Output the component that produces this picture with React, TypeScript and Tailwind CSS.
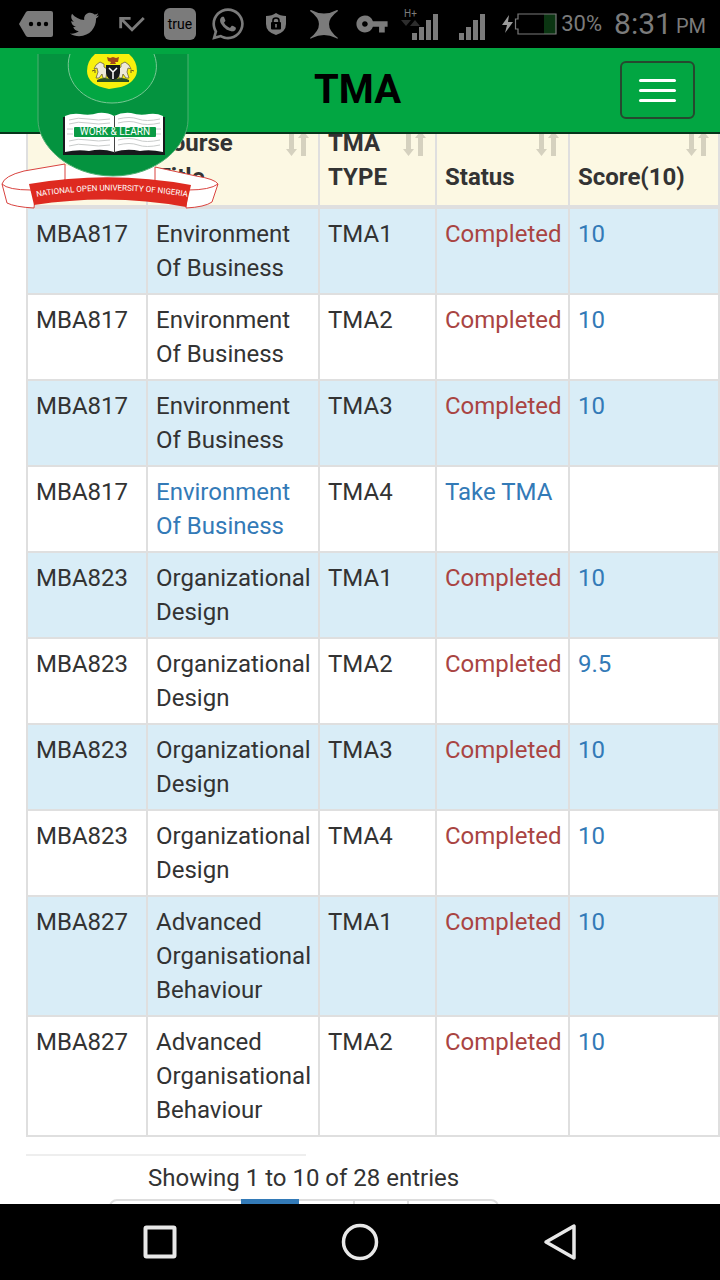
import type { ReactNode } from "react";
import { FaTwitter, FaWhatsapp } from "react-icons/fa";
import { MdCallMissed, MdVpnKey } from "react-icons/md";

type Row = {
  code: string;
  title: string;
  type: string;
  score?: string;
};

const rows: Row[] = [
  { code: "MBA817", title: "Environment Of Business", type: "TMA1", score: "10" },
  { code: "MBA817", title: "Environment Of Business", type: "TMA2", score: "10" },
  { code: "MBA817", title: "Environment Of Business", type: "TMA3", score: "10" },
  { code: "MBA817", title: "Environment Of Business", type: "TMA4" },
  { code: "MBA823", title: "Organizational Design", type: "TMA1", score: "10" },
  { code: "MBA823", title: "Organizational Design", type: "TMA2", score: "9.5" },
  { code: "MBA823", title: "Organizational Design", type: "TMA3", score: "10" },
  { code: "MBA823", title: "Organizational Design", type: "TMA4", score: "10" },
  { code: "MBA827", title: "Advanced Organisational Behaviour", type: "TMA1", score: "10" },
  { code: "MBA827", title: "Advanced Organisational Behaviour", type: "TMA2", score: "10" },
];

const Slot = ({ children }: { children: ReactNode }) => (
  <div className="flex w-12 shrink-0 items-center justify-center">{children}</div>
);

const StatusBar = () => (
  <div className="flex h-12 shrink-0 items-center bg-black pr-3.5 pl-3 text-[#7b7b7b]">
    {/* notifications */}
    <Slot>
      <svg width="34" height="26" viewBox="0 0 34 26">
        <path d="M9 0H32Q34 0 34 2V24Q34 26 32 26H9Q8 26 7 25L0 13L7 1Q8 0 9 0Z" fill="currentColor" />
        <circle cx="12" cy="13" r="2.2" />
        <circle cx="20" cy="13" r="2.2" />
        <circle cx="27" cy="13" r="2.2" />
      </svg>
    </Slot>
    <Slot><FaTwitter size={29} /></Slot>
    <Slot><MdCallMissed size={34} /></Slot>
    <Slot>
      <div className="flex h-8 w-8 items-center justify-center rounded-md bg-[#7b7b7b] text-sm text-black">true</div>
    </Slot>
    <Slot><FaWhatsapp size={36} /></Slot>
    <Slot>
      <svg width="20" height="22" viewBox="0 0 20 22">
        <path d="M10 0Q14 3 20 3V11Q20 19 10 22Q0 19 0 11V3Q6 3 10 0Z" fill="currentColor" />
        <rect x="5" y="9" width="10" height="7.5" rx="1" />
        <path d="M7 10V7.5Q7 5 10 5T13 7.500V10" fill="none" stroke="#000" strokeWidth="1.6" />
        <path d="M10 11V14.500" stroke="#7b7b7b" strokeWidth="1.6" />
      </svg>
    </Slot>
    <Slot>
      <svg width="28" height="29" viewBox="0 0 28 29">
        <path d="M1 0Q14 7 27 0Q28 0 28 1Q10 14 28 28Q28 29 26 28Q14 22 2 28Q0 29 0 28Q18 14 0 1Q0 0 1 0Z" fill="currentColor" />
      </svg>
    </Slot>
    <Slot><MdVpnKey size={34} /></Slot>

    {/* signal, battery and clock */}
    <div className="ml-auto flex items-center">
      <svg width="38" height="32" viewBox="0 0 38 32">
        <text x="3" y="9" fontSize="10" fill="currentColor">H+</text>
        <path d="M0 12H10L5 18ZM9 18H19L14 12Z" fill="#2d2d2d" />
        <path d="M11 25h5v7h-5zM18 19h5v13h-5zM25 12h5v20h-5zM32 6h5v26h-5z" fill="currentColor" />
      </svg>
      <svg className="ml-5" width="27" height="32" viewBox="0 0 27 32">
        <path d="M0 25h5v7H0zM7 19h5v13H7zM14 12h5v20h-5zM21 6h5v26h-5z" fill="currentColor" />
      </svg>
      <svg className="ml-4" width="55" height="22" viewBox="0 0 55 22">
        <path d="M7 2L0 12H5L3 20L11 9H6Z" fill="#9a9a9a" />
        <rect x="42" y="1" width="12" height="20" fill="#0b3512" />
        <path d="M16 1H54V21H16V16H13.500V6H16Z" fill="none" stroke="currentColor" strokeWidth="1.2" />
      </svg>
      <span className="ml-1 text-[22px]">30%</span>
      <span className="ml-3 text-[30px]">8:31</span>
      <span className="ml-1 pt-1 text-xl">PM</span>
    </div>
  </div>
);

const Logo = () => (
  <svg
    className="absolute top-[6px] left-0 z-10"
    width="220"
    height="156"
    viewBox="0 54 220 156"
    role="img"
    aria-label="National Open University of Nigeria"
  >
    {/* shield */}
    <path d="M65 166H155V184H65Z" fill="#fff" />
    <path d="M38 54H188V120C188 145 158 176 113 176C68 176 38 145 38 120Z" fill="#04933f" />
    <path d="M38 54V120C38 145 68 176 113 176C158 176 188 145 188 120V54" fill="none" stroke="#4fae72" strokeWidth="1" />
    {/* crest */}
    <path d="M70 54C62 79 82 103 112 103C142 103 164 79 154 54Z" fill="#02a642" />
    <path d="M70 54C62 79 82 103 112 103C142 103 164 79 154 54" fill="none" stroke="#79c794" strokeWidth="1" />
    <path d="M95 54H129Q137 61 137 71Q136 82 121 87L109 89Q87 85 87 71Q87 61 95 54Z" fill="#f8f00c" />
    <path d="M107 57l3 1 3-1 3 1 3-1-1 5-3 0 1 2h-6l1-2-3-1z" fill="#a3481b" />
    <path d="M96 65l4-3 4 2v3l3 2-1 9h-3l-1-4-3 4h-3l2-6-1-4-3 1zM129 65l-4-3-4 2v3l-3 2 1 9h3l1-4 3 4h3l-2-6 1-4 3 1z" fill="#eee9d8" stroke="#6b6540" strokeWidth=".8" />
    <path d="M106 65H120V73Q119 79 113 81Q107 79 106 73Z" fill="#17191c" />
    <path d="M109 68l4 4 4-4M113 72v7" fill="none" stroke="#fff" strokeWidth="1.5" />
    <path d="M97 80Q104 76 113 80Q122 76 129 80V82H97Z" fill="#2a4f25" />
    <path d="M92 71l3-1v3m39-2l-3-1v3" fill="none" stroke="#6b5b20" strokeWidth="1" />
    {/* book */}
    <path d="M63 117H165V155H63Z" fill="#17191c" />
    <path d="M65 116Q72 113 80 114Q90 116 98 113Q107 112 114 116Q122 112 131 113Q140 116 149 114Q157 113 163 116V152Q150 149 140 151Q127 148 114 152Q102 148 89 151Q78 149 65 152Z" fill="#fff" />
    <g fill="none" stroke="#c9cccb" strokeWidth="1">
      <path d="M69 120Q78 117 88 119T110 119M69 124Q78 121 88 123T110 123M69 141Q78 138 88 140T110 140M69 146Q78 143 88 145T110 145" />
      <path d="M118 119Q130 116 138 119T160 119M118 123Q130 120 138 123T160 123M118 140Q130 137 138 140T160 140M118 145Q130 142 138 145T160 145" />
      <path d="M67 129h6M67 134h6M156 129h5M156 134h5" />
    </g>
    <path d="M114.500 116V153" stroke="#444" strokeWidth="1" />
    <rect x="74" y="127" width="82" height="10" rx="1" fill="#0a9b45" />
    <text x="115" y="135" textAnchor="middle" fontSize="10" fill="#fff">WORK &amp; LEARN</text>
    {/* ribbon */}
    <g fill="#fff" stroke="#d9433f" strokeWidth="1">
      <path d="M65 164V180L36 188L34 208Q15 207 7 203L2 184Q4 176 24 171Z" />
      <path d="M155 167V182L188 190L186 208Q205 207 212 202L218 184Q215 179 196 176Z" />
      <path d="M2 184Q8 190 31 190M218 184Q210 190 188 190" fill="none" />
    </g>
    <path d="M29 184Q110 170 191 185L186 207Q112 193 34 205Z" fill="#de2a20" />
    <path id="motto" d="M30 198Q112 183 194 198" fill="none" />
    <text fontSize="8" fill="#fff">
      <textPath href="#motto" startOffset="50%" textAnchor="middle">NATIONAL OPEN UNIVERSITY OF NIGERIA</textPath>
    </text>
  </svg>
);

const Header = () => (
  <header className="relative z-10 grid h-[86px] shrink-0 grid-cols-3 items-center border-b-2 border-[#06341a] bg-[#02a642] pr-[25px] pl-5">
    <Logo />
    <h1 className="col-start-2 text-center text-[40px] font-bold text-black">TMA</h1>
    <button
      type="button"
      aria-label="Toggle navigation"
      className="flex h-[58px] w-[75px] flex-col items-center justify-center gap-[7px] justify-self-end rounded-md border-2 border-[#26492f]"
    >
      <span className="h-[3px] w-[37px] rounded-xs bg-white" />
      <span className="h-[3px] w-[37px] rounded-xs bg-white" />
      <span className="h-[3px] w-[37px] rounded-xs bg-white" />
    </button>
  </header>
);

const HeadCell = ({ children }: { children: ReactNode }) => (
  <th scope="col" className="relative border-2 border-b-4 border-[#dfdfdf] pt-2 pr-8 pb-[11px] pl-2 text-left align-bottom font-bold">
    {children}
    {/* sort arrows */}
    <svg className="absolute top-3 right-2" width="25" height="26" viewBox="0 0 25 26" fill="#d5d1bf">
      <path d="M4 0H9V19H12L6.500 26L1 19H4ZM16 26H21V8H24L18.500 1L13 8H16Z" />
    </svg>
  </th>
);

const TmaTable = () => (
  <table className="w-full table-fixed border-collapse">
    <colgroup>
      <col className="w-[120px]" />
      <col className="w-[172px]" />
      <col className="w-[117px]" />
      <col className="w-[133px]" />
      <col />
    </colgroup>
    <thead className="bg-[#fcf8e3]">
      <tr>
        <HeadCell>Code</HeadCell>
        <HeadCell>Course Title</HeadCell>
        <HeadCell>TMA TYPE</HeadCell>
        <HeadCell>Status</HeadCell>
        <HeadCell>Score(10)</HeadCell>
      </tr>
    </thead>
    <tbody>
      {rows.map((row) => (
        <tr key={row.code + row.type} className="align-top odd:bg-[#d9edf7] [&>td]:border-2 [&>td]:border-[#dfdfdf] [&>td]:py-2 [&>td]:pl-2">
          <td>{row.code}</td>
          <td>{row.score ? row.title : <a href="#take" className="text-[#337ab7]">{row.title}</a>}</td>
          <td>{row.type}</td>
          <td>
            {row.score ? (
              <span className="text-[#a94442]">Completed</span>
            ) : (
              <a href="#take" className="text-[#337ab7]">Take TMA</a>
            )}
          </td>
          <td>{row.score && <a href="#score" className="text-[#337ab7]">{row.score}</a>}</td>
        </tr>
      ))}
    </tbody>
  </table>
);

const Pagination = () => (
  <nav aria-label="Table pages" className="mx-auto mt-1 flex w-[390px] rounded-lg border-2 border-[#ddd]">
    <button type="button" className="h-14 w-[130px] text-[#777]">Previous</button>
    <button type="button" className="-mt-[2px] h-14 w-[58px] bg-[#337ab7] text-white">1</button>
    <button type="button" className="h-14 w-14 border-r-2 border-[#ddd] text-[#337ab7]">2</button>
    <button type="button" className="h-14 w-[54px] border-r-2 border-[#ddd] text-[#337ab7]">3</button>
    <button type="button" className="h-14 flex-1 text-[#337ab7]">Next</button>
  </nav>
);

const NavBar = () => (
  <div className="grid h-[76px] shrink-0 grid-cols-[1fr_200px_200px_200px_1fr] place-items-center bg-black">
    <button type="button" aria-label="Recent apps" className="col-start-2">
      <svg width="34" height="34" viewBox="0 0 34 34" fill="none" stroke="#e8e8e8" strokeWidth="4">
        <rect x="2.500" y="2.500" width="29" height="29" rx="1" />
      </svg>
    </button>
    <button type="button" aria-label="Home">
      <svg width="38" height="38" viewBox="0 0 38 38" fill="none" stroke="#e8e8e8" strokeWidth="3.500">
        <circle cx="19" cy="19" r="16.500" />
      </svg>
    </button>
    <button type="button" aria-label="Back">
      <svg width="34" height="38" viewBox="0 0 34 38" fill="none" stroke="#e8e8e8" strokeWidth="3.500" strokeLinejoin="round">
        <path d="M31 3V35L3 19Z" />
      </svg>
    </button>
  </div>
);

export default function App() {
  return (
    <div className="flex h-screen flex-col bg-white font-[Roboto,sans-serif] text-2xl leading-[34px] text-[#333]">
      <StatusBar />
      <Header />
      <main className="min-h-0 flex-1 overflow-hidden">
        {/* list is scrolled a little under the header */}
        <div className="-mt-[18px] pl-[26px]">
          <TmaTable />
          <hr className="mt-[17px] w-[280px] border-t-2 border-[#eee]" />
          <div className="w-4/5 pt-[5px]">
            <p className="text-center">Showing 1 to 10 of 28 entries</p>
            <Pagination />
          </div>
        </div>
      </main>
      <NavBar />
    </div>
  );
}
